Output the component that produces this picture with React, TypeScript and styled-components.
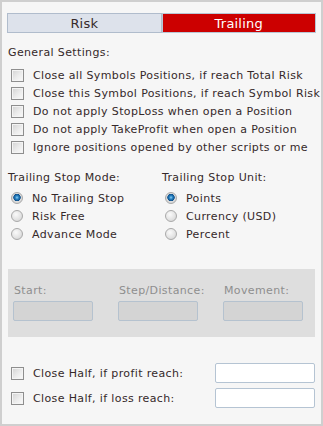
import React from "react";
import styled, { createGlobalStyle } from "styled-components";

const Global = createGlobalStyle`
  html, body {
    margin: 0;
    padding: 0;
    background: #ffffff;
  }
  * {
    box-sizing: border-box;
  }
`;

const textColor = "#35292a";

const Panel = styled.div`
  width: 323px;
  height: 426px;
  border: 2px solid #cfcfcf;
  background: #f6f6f6;
  padding: 11px 5px 0 5px;
  font-family: "DejaVu Sans", "Liberation Sans", sans-serif;
  font-size: 11px;
  letter-spacing: 0.37px;
  color: ${textColor};
  display: flex;
  flex-direction: column;
  overflow: hidden;
`;

const Tabs = styled.div`
  display: flex;
  height: 20px;
`;

const Tab = styled.div<{ active?: boolean }>`
  flex: 1;
  display: flex;
  align-items: center;
  justify-content: center;
  font-size: 13px;
  letter-spacing: 0.2px;
  border: 1px solid ${({ active }) => (active ? "#b9c6d4" : "#b0bccc")};
  background: ${({ active }) => (active ? "#cc0000" : "#dde2eb")};
  color: ${({ active }) => (active ? "#ffffff" : textColor)};
`;

const Heading = styled.div<{ muted?: boolean }>`
  height: 18px;
  line-height: 18px;
  padding-left: 1px;
  white-space: nowrap;
  color: ${({ muted }) => (muted ? "#8e8e8e" : "inherit")};
`;

const Section = styled.div<{ top: number }>`
  margin-top: ${({ top }) => top}px;
  display: flex;
  flex-direction: column;
`;

const Row = styled.label`
  height: 18px;
  display: flex;
  align-items: center;
  gap: 9px;
  padding-left: 4px;
  white-space: nowrap;
`;

const Box = styled.span`
  width: 13px;
  height: 13px;
  flex: none;
  border: 1px solid #8e8e8e;
  background: linear-gradient(135deg, #d2d2d2 0%, #ececec 55%, #fbfbfb 100%);
  box-shadow: inset 0 0 0 1px #f4f4f4;
`;

const Radio = styled.span<{ checked?: boolean }>`
  width: 12px;
  height: 12px;
  flex: none;
  border-radius: 50%;
  border: 1px solid #a9a9a9;
  background: ${({ checked }) =>
    checked
      ? "radial-gradient(circle at 50% 45%, #8fd0f5 0, #2b86c6 1.6px, #0d4f8a 3.4px, #dcdcdc 4px, #d2d2d2 100%)"
      : "radial-gradient(circle at 40% 35%, #fafafa 0, #e6e6e6 50%, #cfcfcf 100%)"};
`;

const List = styled.div<{ top: number }>`
  margin-top: ${({ top }) => top}px;
  display: flex;
  flex-direction: column;
`;

const Columns = styled.div`
  margin-top: 13px;
  display: flex;
`;

const Column = styled.div<{ width: number }>`
  width: ${({ width }) => width}px;
  display: flex;
  flex-direction: column;
`;

const Disabled = styled.div`
  margin: 26px 1px 0 1px;
  height: 68px;
  background: #dedede;
  padding: 13px 0 0 5px;
  display: flex;
  gap: 25px;
`;

const Field = styled.div`
  width: 80px;
  display: flex;
  flex-direction: column;
  gap: 1px;
`;

const GreyInput = styled.div`
  height: 20px;
  border: 1px solid #b5c2cf;
  border-radius: 2px;
  background: #d4d4d4;
`;

const Bottom = styled.div`
  margin-top: 26px;
  display: flex;
  flex-direction: column;
  gap: 5px;
`;

const BottomRow = styled.div`
  height: 20px;
  display: flex;
  align-items: center;
  justify-content: space-between;
`;

const WhiteInput = styled.input`
  width: 100px;
  height: 20px;
  margin: 0 1px 0 0;
  border: 1px solid #b5c4d3;
  border-radius: 2px;
  background: #ffffff;
  padding: 0 3px;
  outline: none;
`;

const general = [
  "Close all Symbols Positions, if reach Total Risk",
  "Close this Symbol Positions, if reach Symbol Risk",
  "Do not apply StopLoss when open a Position",
  "Do not apply TakeProfit when open a Position",
  "Ignore positions opened by other scripts or me",
];

const modes = ["No Trailing Stop", "Risk Free", "Advance Mode"];
const units = ["Points", "Currency (USD)", "Percent"];

export default function App() {
  return (
    <>
      <Global />
      <Panel>
        <Tabs>
          <Tab>Risk</Tab>
          <Tab active>Trailing</Tab>
        </Tabs>
        <Section top={11}>
          <Heading>General Settings:</Heading>
          <List top={4}>
            {general.map((t) => (
              <Row key={t}>
                <Box />
                {t}
              </Row>
            ))}
          </List>
        </Section>
        <Columns>
          <Column width={154}>
            <Heading>Trailing Stop Mode:</Heading>
            <List top={2}>
              {modes.map((t, i) => (
                <Row key={t}>
                  <Radio checked={i === 0} />
                  {t}
                </Row>
              ))}
            </List>
          </Column>
          <Column width={150}>
            <Heading>Trailing Stop Unit:</Heading>
            <List top={2}>
              {units.map((t, i) => (
                <Row key={t}>
                  <Radio checked={i === 0} />
                  {t}
                </Row>
              ))}
            </List>
          </Column>
        </Columns>
        <Disabled>
          {["Start:", "Step/Distance:", "Movement:"].map((l) => (
            <Field key={l}>
              <Heading muted>{l}</Heading>
              <GreyInput />
            </Field>
          ))}
        </Disabled>
        <Bottom>
          <BottomRow>
            <Row>
              <Box />
              Close Half, if profit reach:
            </Row>
            <WhiteInput />
          </BottomRow>
          <BottomRow>
            <Row>
              <Box />
              Close Half, if loss reach:
            </Row>
            <WhiteInput />
          </BottomRow>
        </Bottom>
      </Panel>
    </>
  );
}
